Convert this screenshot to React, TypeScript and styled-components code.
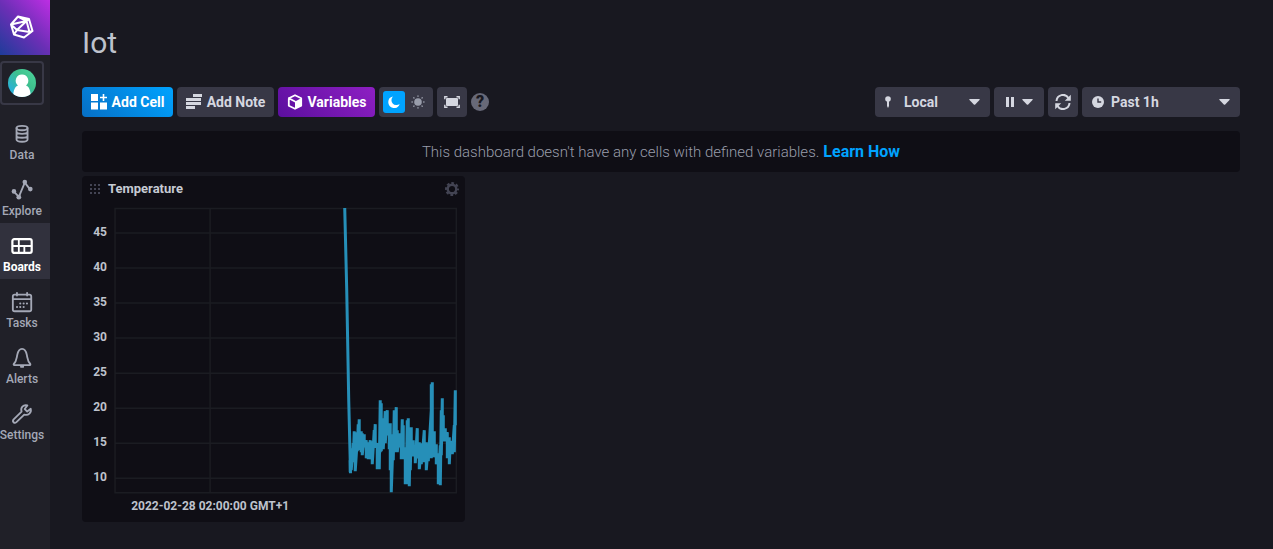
import React from 'react';
import styled, { createGlobalStyle } from 'styled-components';

const GlobalStyle = createGlobalStyle`
  * { box-sizing: border-box; }
  body {
    margin: 0;
    background: #181820;
    color: #d5d7e0;
    font-family: Roboto, "Liberation Sans", sans-serif;
    font-size: 14px;
  }
  button, select { font: inherit; color: inherit; }
  svg { display: block; flex: none; }
`;

const Page = styled.div`
  display: flex;
  min-height: 100vh;
`;

const Sidebar = styled.nav`
  flex: none;
  width: 50px;
  background: #202028;
`;

const Logo = styled.a`
  display: flex;
  align-items: center;
  height: 55px;
  padding-left: 9px;
  background: linear-gradient(45deg, #1e3c9a 0%, #6a2fb5 50%, #be2ee4 100%);
  color: #ffffff;
`;

const Account = styled.button`
  display: flex;
  align-items: center;
  justify-content: center;
  width: 44px;
  height: 44px;
  margin: 6px 0 6px;
  padding: 0;
  background: none;
  border: 2px solid #383846;
  border-radius: 4px;
`;

const NavItem = styled.a<{ $active?: boolean }>`
  display: flex;
  flex-direction: column;
  align-items: center;
  gap: 1px;
  height: 56px;
  padding: 11px 6px 0 0;
  color: ${(p) => (p.$active ? '#ffffff' : '#a4a8b6')};
  background: ${(p) => (p.$active ? '#31313d' : 'transparent')};
  font-size: 12px;
  line-height: 16px;
  font-weight: ${(p) => (p.$active ? 700 : 500)};
  text-decoration: none;
  white-space: nowrap;
`;

const Main = styled.main`
  flex: 1;
  min-width: 0;
  padding: 24px 33px 24px 32px;
`;

const Title = styled.h1`
  margin: 0 0 25px;
  font-size: 30px;
  line-height: 38px;
  font-weight: 400;
  color: #bec2cc;
`;

const Toolbar = styled.div`
  display: flex;
  align-items: center;
  justify-content: space-between;
  margin-bottom: 14px;
`;

const Group = styled.div`
  display: flex;
  align-items: center;
  gap: 4px;
`;

const tones = {
  plain: '#383846',
  primary: 'linear-gradient(45deg, #066fc5, #00a3ff)',
  secondary: 'linear-gradient(45deg, #5b0f9e, #8e1fc3)',
};

const Button = styled.button<{ $tone?: keyof typeof tones; $width: number }>`
  display: flex;
  align-items: center;
  justify-content: center;
  gap: 5px;
  width: ${(p) => p.$width}px;
  height: 30px;
  padding: 0;
  border: 0;
  border-radius: 4px;
  background: ${(p) => tones[p.$tone || 'plain']};
  color: ${(p) => (p.$tone ? '#ffffff' : '#d5d7e0')};
  font-weight: 700;
  white-space: nowrap;
`;

const Toggle = styled.div`
  display: flex;
  align-items: center;
  gap: 2px;
  height: 30px;
  padding: 4px;
  border-radius: 4px;
  background: #383846;
`;

const ToggleButton = styled.button<{ $on?: boolean }>`
  display: flex;
  align-items: center;
  justify-content: center;
  width: 22px;
  height: 22px;
  padding: 0;
  border: 0;
  border-radius: 3px;
  background: ${(p) => (p.$on ? '#00a3ff' : 'transparent')};
  color: ${(p) => (p.$on ? '#ffffff' : '#999dab')};
`;

const Help = styled.button`
  display: flex;
  align-items: center;
  justify-content: center;
  width: 18px;
  height: 18px;
  padding: 0;
  border: 0;
  border-radius: 50%;
  background: #676978;
  color: #181820;
  font-size: 16px;
  line-height: 18px;
  font-weight: 900;
`;

const Dropdown = styled.label<{ $width: number }>`
  display: flex;
  align-items: center;
  gap: 5px;
  width: ${(p) => p.$width}px;
  height: 30px;
  padding: 0 10px 0 8px;
  border-radius: 4px;
  background: #383846;
`;

const IconSlot = styled.span<{ $width: number }>`
  display: flex;
  align-items: center;
  justify-content: flex-start;
  width: ${(p) => p.$width}px;
`;

const Select = styled.select`
  flex: 1;
  min-width: 0;
  padding: 0;
  border: 0;
  appearance: none;
  background: none;
  font-weight: 700;
`;

const Banner = styled.p`
  display: flex;
  align-items: center;
  justify-content: center;
  gap: 4px;
  height: 41px;
  margin: 0 0 4px;
  border-radius: 4px;
  background: #0f0e15;
  color: #999dab;
  font-size: 15px;
  font-weight: 300;
`;

const BannerLink = styled.a`
  color: #00a3ff;
  font-size: 16px;
  font-weight: 700;
  text-decoration: none;
`;

const Cells = styled.div`
  display: grid;
  grid-template-columns: repeat(3, minmax(0, 1fr));
  gap: 4px;
`;

const Cell = styled.section`
  border-radius: 4px;
  background: #0f0e15;
`;

const CellHeader = styled.header`
  display: flex;
  align-items: center;
  gap: 8px;
  height: 24px;
  padding: 2px 6px 0 8px;
`;

const CellTitle = styled.h2`
  flex: 1;
  margin: 0;
  font-size: 13px;
  line-height: 16px;
  font-weight: 700;
  color: #c6cad3;
`;

const CellMenu = styled.button`
  padding: 0;
  border: 0;
  background: none;
  color: #434453;
`;

const Plot = styled.svg`
  width: 100%;
  height: auto;
  text {
    fill: #bec2cc;
    font-size: 12px;
    font-weight: 700;
  }
`;

const CaretDown = () => (
  <svg width="11" height="6" viewBox="0 0 11 6" fill="currentColor" aria-hidden="true">
    <path d="M.8 0h9.4q1 0 .3.9L6.200 5.500q-.7.7-1.400 0L.5.9Q-.2 0 .8 0z" />
  </svg>
);

const strokeProps = {
  fill: 'none',
  stroke: 'currentColor',
  strokeWidth: 2,
  strokeLinecap: 'round' as const,
  strokeLinejoin: 'round' as const,
};

const navIcons: Record<string, React.ReactNode> = {
  Data: (
    <g {...strokeProps}>
      <ellipse cx="12" cy="5.500" rx="6" ry="2.400" />
      <path d="M6 5.500v12.500c0 3.200 12 3.200 12 0V5.500M6 9.600c0 3 12 3 12 0M6 13.800c0 3 12 3 12 0" />
    </g>
  ),
  Explore: (
    <g fill="currentColor">
      <path d="M3 13.500l5.500 6L15 4l5.500 7" {...strokeProps} />
      <circle cx="3.200" cy="13.500" r="2.500" />
      <circle cx="8.500" cy="19.800" r="2.600" />
      <circle cx="15" cy="3.300" r="2.500" />
      <circle cx="21" cy="11" r="2.500" />
    </g>
  ),
  Boards: (
    <g {...strokeProps} strokeWidth={2.400}>
      <rect x="1.500" y="4.500" width="21" height="15" rx="2" />
      <path d="M2 12h20M8.500 5v14M14.500 12v7" strokeWidth={2} />
    </g>
  ),
  Tasks: (
    <g {...strokeProps}>
      <rect x="2" y="4" width="20" height="18" rx="2" />
      <path d="M2.500 8.800h19M6.500 2v3M17.500 2v3" />
      <path d="M10 13.500h.1M13.700 13.500h.1M17.300 13.500h.1M6.500 17.500h.1M10 17.500h.1M13.700 17.500h.1" strokeWidth={2.200} />
    </g>
  ),
  Alerts: (
    <g {...strokeProps}>
      <path d="M3 18.500c3-3 2.800-5 3.800-10C7.600 4.500 9.500 2 12 2s4.400 2.500 5.200 6.500c1 5 .8 7 3.800 10 .4 1-.5 1.200-1 1.200H4c-.7 0-1.500-.4-1-1.200z" />
      <path d="M10.800 21.500h2.500" />
    </g>
  ),
  Settings: (
    <path
      {...strokeProps}
      d="M17.800 2.700c-4.500-1.200-7.800 2.300-6.300 6.600L2.900 17.800c-2 2.300.8 5 3 3L14.400 12.600c4.500 1.400 8.200-2 7-6.300L17.600 9.200l-2.700-2.600z"
    />
  ),
};

const NavIcon = ({ name }: { name: string }) => (
  <svg width="24" height="24" viewBox="0 0 24 24" aria-hidden="true">
    <g transform="translate(1 1) scale(.92)">{navIcons[name]}</g>
  </svg>
);

const yTicks = [45, 40, 35, 30, 25, 20, 15, 10];

// Highest and lowest reading at each step along the time axis: x, top, bottom.
const readings: [number, number, number][] = [
  [350, 460, 472], [351, 448, 470], [353, 443, 462], [354, 431, 460], [355, 432, 471], [357, 440, 451],
  [358, 424, 447], [359, 419, 450], [361, 431, 452], [362, 433, 455], [364, 434, 447], [366, 440, 458],
  [368, 442, 459], [370, 440, 459], [372, 441, 464], [374, 430, 444], [375, 424, 447], [377, 443, 469],
  [379, 445, 469], [380, 400, 452], [381, 403, 451], [383, 418, 449], [385, 411, 443], [387, 410, 435],
  [389, 423, 449], [390, 423, 470], [391, 440, 492], [393, 434, 460], [394, 410, 445], [396, 407, 452],
  [397, 430, 452], [399, 433, 447], [401, 437, 459], [402, 419, 459], [403, 425, 450], [405, 450, 484],
  [406, 447, 484], [407, 420, 460], [408, 418, 470], [409, 440, 486], [410, 432, 470], [411, 427, 456],
  [413, 440, 456], [415, 445, 463], [417, 428, 458], [419, 442, 469], [421, 449, 464], [422, 443, 455],
  [424, 430, 462], [426, 442, 470], [428, 444, 461], [431, 410, 458], [431, 384, 448], [432, 382, 447],
  [434, 431, 457], [436, 444, 464], [438, 453, 484], [440, 445, 485], [441, 410, 455], [442, 398, 440],
  [443, 415, 441], [445, 428, 441], [447, 432, 458], [449, 437, 464], [450, 442, 450], [452, 441, 454],
  [454, 425, 452], [455, 390, 425],
];

const trace = readings.map(([x, top, bottom]) => `${x},${top} ${x},${bottom}`).join(' ');

const TemperaturePlot = () => (
  <Plot viewBox="82 200 383 322" role="img" aria-label="Temperature over time">
    <path
      d="M115 233h341M115 268h341M115 303h341M115 338h341M115 373h341M115 408h341M115 443h341M115 478h341M210 208v285M115 208.500h341v284h-341z"
      fill="none"
      stroke="#1b1c22"
      strokeWidth="1.500"
    />
    {yTicks.map((tick, i) => (
      <text key={tick} x="107" y={236 + i * 35} textAnchor="end">
        {tick}
      </text>
    ))}
    <text x="210" y="510" textAnchor="middle">
      2022-02-28 02:00:00 GMT+1
    </text>
    <g fill="none" stroke="#268fb8" strokeWidth="3" strokeLinejoin="bevel">
      <path d="M344.500 208L346.500 290 348.500 400 350.300 473" />
      <polyline points={trace} />
    </g>
  </Plot>
);

export default function App() {
  return (
    <>
      <GlobalStyle />
      <Page>
        <Sidebar>
          <Logo href="#" aria-label="Home">
            <svg width="26" height="26" viewBox="0 0 26 26" {...strokeProps}>
              <path d="M9 1.500L20 4l3.500 12-8.500 6.500L5 19.500 2 9.500zM2 9.500L17.500 6 20 4M17.500 6l3 11-12.500-2zM9 1.500l8.500 4.500M2 9.500L8 15l-3 4.500M20.500 17l3-1" />
            </svg>
          </Logo>
          <Account aria-label="Account">
            <svg width="28" height="28" viewBox="0 0 28 28">
              <defs>
                <linearGradient id="avatar" x1="0" y1="1" x2="1" y2="0">
                  <stop offset="0" stopColor="#22adf6" />
                  <stop offset=".6" stopColor="#3fc08c" />
                  <stop offset="1" stopColor="#4ed8a0" />
                </linearGradient>
                <clipPath id="round">
                  <circle cx="14" cy="14" r="14" />
                </clipPath>
              </defs>
              <g clipPath="url(#round)">
                <rect width="28" height="28" fill="url(#avatar)" />
                <path d="M14 5.500a6.200 6.200 0 0 1 4 11c3 1 4.800 5 4.800 11.500H5.200c0-6.500 1.800-10.500 4.800-11.500a6.200 6.200 0 0 1 4-11z" fill="#fff" />
              </g>
            </svg>
          </Account>
          {Object.keys(navIcons).map((name) => (
            <NavItem key={name} href="#" $active={name === 'Boards'}>
              <NavIcon name={name} />
              {name}
            </NavItem>
          ))}
        </Sidebar>
        <Main>
          <Title>Iot</Title>
          <Toolbar>
            <Group>
              <Button $tone="primary" $width={91}>
                <svg width="16" height="16" viewBox="0 0 16 16" fill="currentColor">
                  <path d="M0 0h7v7H0zM0 8.500h7v7H0zM9 8.500h7v7H9zM11.700 0h1.600v2.700H16v1.600h-2.700V7h-1.600V4.300H9V2.700h2.700z" />
                </svg>
                Add Cell
              </Button>
              <Button $width={97}>
                <svg width="16" height="16" viewBox="0 0 16 16" fill="currentColor">
                  <path d="M7 0h9v3H7zM0 4h15v3H0zM0 8h15v3H0zM0 12h9v3H0z" />
                </svg>
                Add Note
              </Button>
              <Button $tone="secondary" $width={97}>
                <svg width="16" height="16" viewBox="0 0 16 16">
                  <path d="M8 1.200l6.200 3v7.600L8 14.800l-6.200-3V4.200zM1.800 4.200L8 7.500" {...strokeProps} strokeWidth={1.800} />
                  <path d="M8 7.500l6.200-3.300v7.600L8 14.800z" fill="currentColor" />
                </svg>
                Variables
              </Button>
              <Toggle>
                <ToggleButton $on aria-label="Dark mode" aria-pressed="true">
                  <svg width="12" height="12" viewBox="0 0 12 12" fill="currentColor">
                    <path d="M5 .5a5.800 5.800 0 1 0 6.600 7.500A5 5 0 0 1 5 .5z" />
                  </svg>
                </ToggleButton>
                <ToggleButton aria-label="Light mode" aria-pressed="false">
                  <svg width="14" height="14" viewBox="0 0 14 14">
                    <circle cx="7" cy="7" r="3.800" fill="currentColor" />
                    <path d="M7 1v.3M7 12.700v.3M1 7h.3M12.700 7h.3M2.800 2.800l.2.200M11 11l.2.200M2.800 11.200l.2-.2M11 3l.2-.2" {...strokeProps} strokeWidth={1.400} />
                  </svg>
                </ToggleButton>
              </Toggle>
              <Button $width={30} aria-label="Presentation mode">
                <svg width="16" height="12" viewBox="0 0 16 12">
                  <rect x="2" y="2" width="12" height="8" rx="1" fill="currentColor" />
                  <path d="M.8 3.300V.8h2.700M12.500.8h2.700v2.500M15.200 8.700v2.500h-2.700M3.500 11.200H.8V8.700" fill="none" stroke="currentColor" strokeWidth="1.400" />
                </svg>
              </Button>
              <Help aria-label="Help">?</Help>
            </Group>
            <Group>
              <Dropdown $width={115}>
                <IconSlot $width={16}>
                  <svg width="10" height="14" viewBox="0 0 10 14" fill="currentColor">
                    <circle cx="5" cy="4" r="2.800" />
                    <path d="M4 5h2v6l-1 2-1-2z" />
                  </svg>
                </IconSlot>
                <Select aria-label="Time zone">
                  <option>Local</option>
                </Select>
                <CaretDown />
              </Dropdown>
              <Button $width={50} aria-label="Auto refresh">
                <IconSlot $width={12}>
                  <svg width="10" height="10" viewBox="0 0 10 10" fill="currentColor">
                    <path d="M1 0h3v10H1zM6 0h3v10H6z" />
                  </svg>
                </IconSlot>
                <CaretDown />
              </Button>
              <Button $width={30} aria-label="Refresh">
                <svg width="16" height="16" viewBox="0 0 16 16">
                  <path d="M1.500 7A6.500 6.500 0 0 1 13.500 4M14.500 9A6.500 6.500 0 0 1 2.500 12" fill="none" stroke="currentColor" strokeWidth="2" />
                  <path d="M15.800.8v6H9.800zM.2 15.200v-6h6z" fill="currentColor" />
                </svg>
              </Button>
              <Dropdown $width={158}>
                <IconSlot $width={16}>
                  <svg width="16" height="12" viewBox="0 0 16 12">
                    <circle cx="8" cy="6" r="6" fill="currentColor" />
                    <path d="M8 2.500V6h3.200" fill="none" stroke="#383846" strokeWidth="1.400" />
                  </svg>
                </IconSlot>
                <Select aria-label="Time range">
                  <option>Past 1h</option>
                </Select>
                <CaretDown />
              </Dropdown>
            </Group>
          </Toolbar>
          <Banner>
            This dashboard doesn't have any cells with defined variables. <BannerLink href="#">Learn How</BannerLink>
          </Banner>
          <Cells>
            <Cell>
              <CellHeader>
                <svg width="10" height="10" viewBox="0 0 10 10" fill="#434453" aria-hidden="true">
                  <path d="M0 0h2v2H0zM4 0h2v2H4zM8 0h2v2H8zM0 4h2v2H0zM4 4h2v2H4zM8 4h2v2H8zM0 8h2v2H0zM4 8h2v2H4zM8 8h2v2H8z" />
                </svg>
                <CellTitle>Temperature</CellTitle>
                <CellMenu aria-label="Configure cell">
                  <svg width="14" height="14" viewBox="0 0 14 14" fill="none" stroke="currentColor">
                    <circle cx="7" cy="7" r="4.300" strokeWidth="2.400" />
                    <circle cx="7" cy="7" r="6" strokeWidth="2" strokeDasharray="2.700 2.012" strokeDashoffset="1.350" />
                  </svg>
                </CellMenu>
              </CellHeader>
              <TemperaturePlot />
            </Cell>
          </Cells>
        </Main>
      </Page>
    </>
  );
}
